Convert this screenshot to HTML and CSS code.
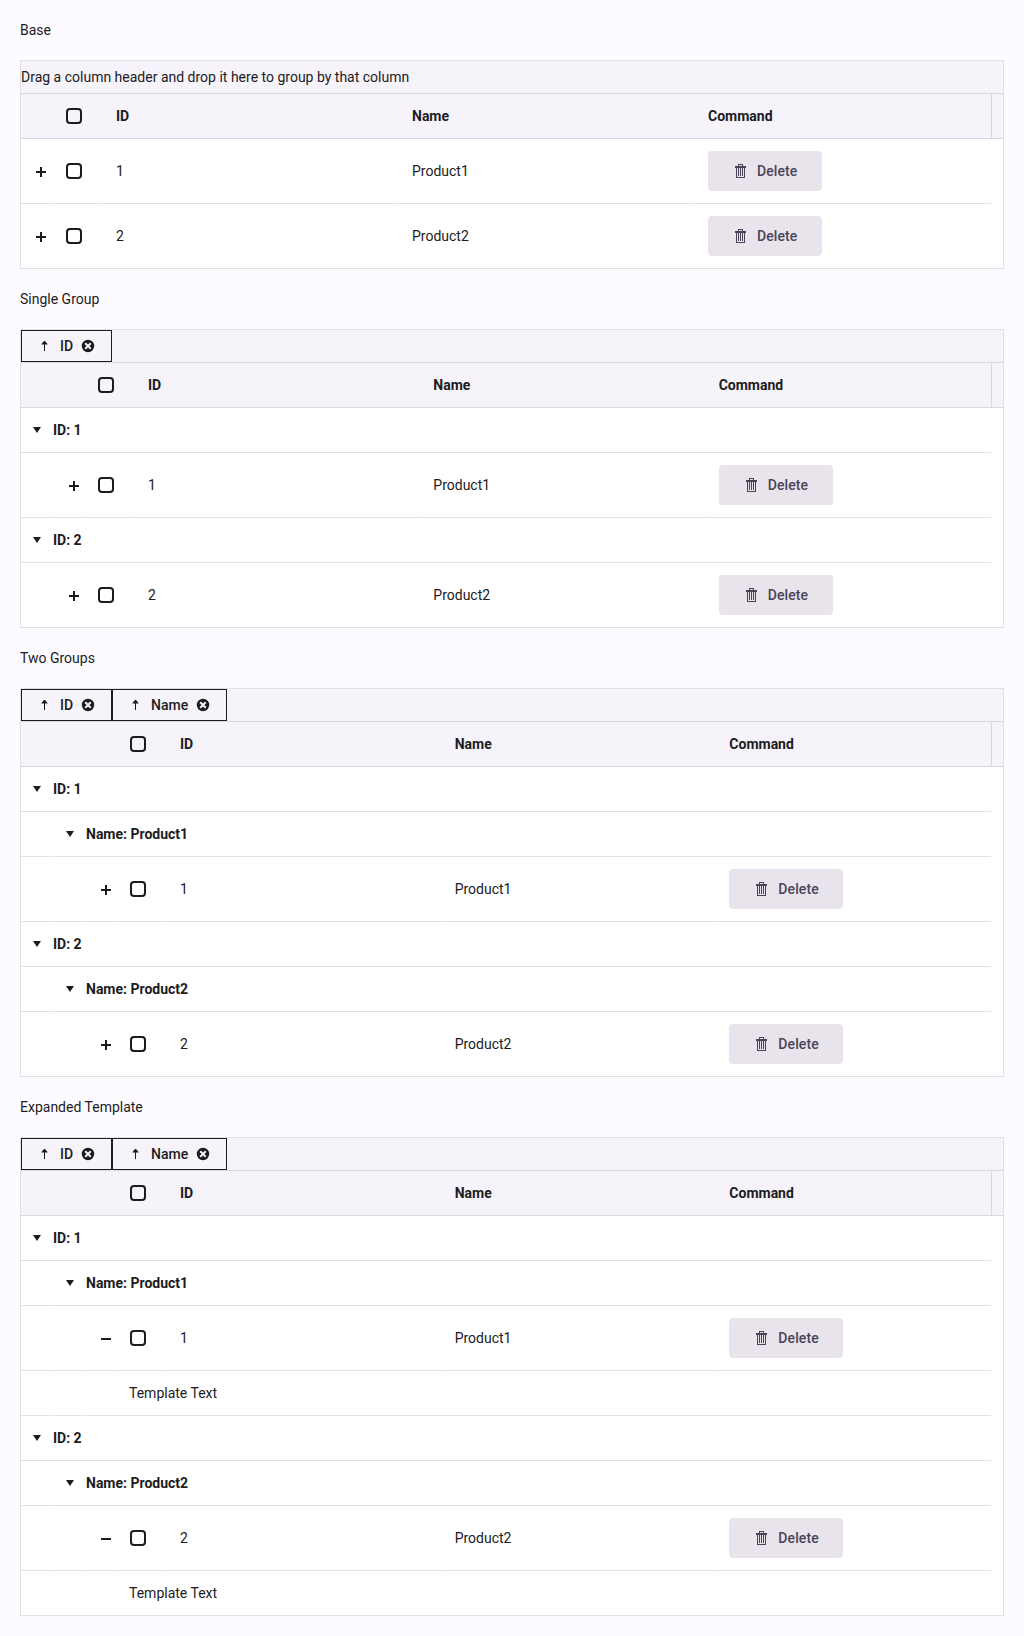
FILE: index.html
```
<!DOCTYPE html>
<html lang="en">
<head>
<meta charset="utf-8">
<title>Grid grouping</title>
<link rel="stylesheet" href="styles.css">
</head>
<body>
<svg class="defs" aria-hidden="true">
  <symbol id="plus" viewBox="0 0 16 16"><path d="M7 4h2v4h4v2H9v4H7v-4H3V8h4z"/></symbol>
  <symbol id="minus" viewBox="0 0 16 16"><path d="M3 8h10v2H3z"/></symbol>
  <symbol id="caret" viewBox="0 0 16 16"><path d="M4 5h8l-4 6z"/></symbol>
  <symbol id="sort" viewBox="0 0 16 16"><path d="M7 3h1l2.500 3v.6H8V13H7V6.600H4.500V6z"/></symbol>
  <symbol id="remove" viewBox="0 0 16 16"><path fill-rule="evenodd" d="M8 1.800a6.200 6.200 0 1 0 0 12.400A6.200 6.200 0 0 0 8 1.800zM5.900 4.500 8 6.600l2.100-2.100 1.400 1.400L9.400 8l2.100 2.100-1.400 1.400L8 9.400l-2.100 2.100-1.400-1.400L6.600 8 4.500 5.900z"/></symbol>
  <symbol id="trash" viewBox="0 0 16 16"><path fill-rule="evenodd" d="M6 1h5v2h3v2h-1v10H4V5H3V3h3zM7 2v1h3V2zM5 5v9h7V5zM6 5h1v8H6zM8 5h1v8H8zM10 5h1v8h-1z"/></symbol>
</svg>
<main id="page"></main>
<script src="app.js"></script>
</body>
</html>
```
FILE: styles.css
```
* { box-sizing: border-box; }
body {
  margin: 0;
  padding: 0 20px;
  background: #fdfbff;
  color: #1c1b1e;
  font: 400 14px/20px Roboto, "Liberation Sans", sans-serif;
}
.defs { display: none; }
.title { margin: 0; padding: 20px 0; font: inherit; }
.icon { display: block; flex: none; width: 16px; height: 16px; fill: currentColor; }

.grid { border: 1px solid #e1e1e4; background: #fff; }
.group-bar {
  display: flex;
  align-items: center;
  height: 33px;
  background: #f6f3fa;
  border-bottom: 1px solid #dad7de;
}
.group-bar .chip { margin-bottom: 0; }
.chip {
  display: flex;
  align-items: center;
  height: 32px;
  padding: 0 15px;
  border: 1px solid #1c1b1e;
  font-weight: 500;
}
.chip-label { margin: 0 7px; }

.header { padding-right: 11px; background: #f6f3fa; border-bottom: 1px solid #dad7de; }
.header table { width: 971px; border-right: 1px solid #dad7de; }
.header th { height: 44px; font-weight: 700; text-align: left; }
.body { padding-right: 12px; }

table { width: 970px; table-layout: fixed; border-collapse: separate; border-spacing: 0; }
.col-icon { width: 32px; }
.col-check { width: 50px; }
th, td { padding: 0 12px; border: 0 solid transparent; border-left-width: 1px; }
th:first-child, td:first-child, .detail { border-left-width: 0; }
td { height: 45px; border-bottom: 1px solid #e1e1e4; }
.data td { height: 65px; }
tr:last-child td { height: 44px; border-bottom: 0; }
.data:last-child td { height: 64px; }
td.tool { padding-right: 0; }

.group { display: flex; align-items: center; gap: 8px; margin-left: -4px; font-weight: 700; }
.check {
  display: block;
  appearance: none;
  width: 16px;
  height: 16px;
  margin: 0;
  border: 2px solid #1c1b1e;
  border-radius: 4px;
}
.delete {
  display: flex;
  align-items: center;
  gap: 9px;
  width: 114px;
  height: 40px;
  padding: 0 24px;
  border: 0;
  border-radius: 4px;
  background: #e9e4eb;
  color: #494459;
  font: 500 14px/20px Roboto, "Liberation Sans", sans-serif;
  letter-spacing: 0.1px;
}
```
FILE: app.js
```
const icon = name => `<svg class="icon"><use href="#${name}"/></svg>`;
const check = '<input type="checkbox" class="check">';
const spacers = n => '<td></td>'.repeat(n);

function cols(depth) {
  return '<colgroup>' + '<col class="col-icon">'.repeat(depth + 1) +
    '<col class="col-check"><col><col><col></colgroup>';
}

function groupRow(level, depth, text) {
  return `<tr>${spacers(level)}<td colspan="${depth + 5 - level}"><div class="group">${icon('caret')}${text}</div></td></tr>`;
}

function renderGrid(title, groups, expanded) {
  const depth = groups.length;
  const bar = depth
    ? groups.map(g => `<div class="chip">${icon('sort')}<span class="chip-label">${g}</span>${icon('remove')}</div>`).join('')
    : 'Drag a column header and drop it here to group by that column';
  let rows = '';
  for (const id of [1, 2]) {
    const values = { ID: id, Name: 'Product' + id };
    groups.forEach((g, level) => { rows += groupRow(level, depth, `${g}: ${values[g]}`); });
    rows += `<tr class="data">${spacers(depth)}<td class="tool">${icon(expanded ? 'minus' : 'plus')}</td><td>${check}</td>
      <td>${id}</td><td>${values.Name}</td><td><button class="delete">${icon('trash')}Delete</button></td></tr>`;
    if (expanded) {
      rows += `<tr>${spacers(depth + 1)}<td class="detail" colspan="4">Template Text</td></tr>`;
    }
  }
  return `<h2 class="title">${title}</h2>
    <section class="grid">
      <div class="group-bar">${bar}</div>
      <div class="header"><table>${cols(depth)}
        <tr>${'<th></th>'.repeat(depth + 1)}<th>${check}</th><th>ID</th><th>Name</th><th>Command</th></tr></table></div>
      <div class="body"><table>${cols(depth)}<tbody>${rows}</tbody></table></div>
    </section>`;
}

document.getElementById('page').innerHTML =
  renderGrid('Base', [], false) +
  renderGrid('Single Group', ['ID'], false) +
  renderGrid('Two Groups', ['ID', 'Name'], false) +
  renderGrid('Expanded Template', ['ID', 'Name'], true);
```
